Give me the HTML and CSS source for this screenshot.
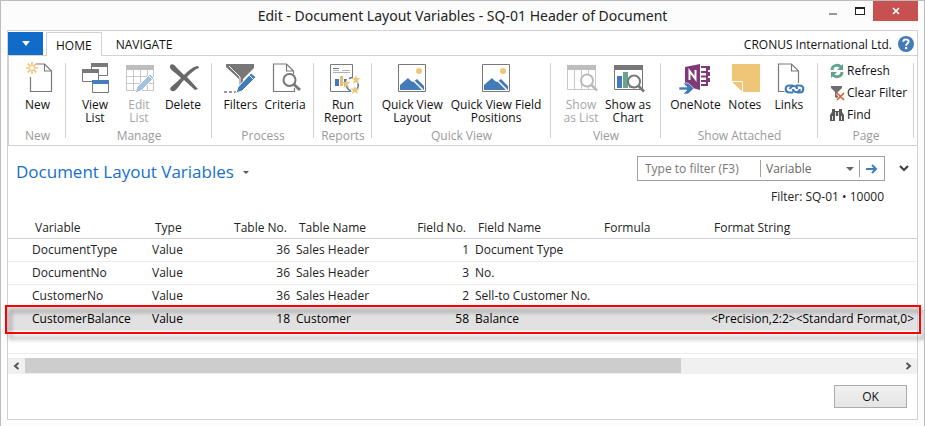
FILE: index.html
```html
<!DOCTYPE html>
<html lang="en">
<head>
<meta charset="utf-8">
<title>Edit - Document Layout Variables</title>
<link rel="stylesheet" href="styles.css">
</head>
<body>
<header class="titlebar">
  <h1 class="window-title">Edit - Document Layout Variables - SQ-01 Header of Document</h1>
  <div class="window-controls">
    <button class="win-btn" aria-label="Minimize"><svg width="10" height="10" viewBox="0 0 10 10"><path d="M1 7h8v2H1z" fill="#999"/></svg></button>
    <button class="win-btn" aria-label="Maximize"><svg width="10" height="10" viewBox="0 0 10 10"><path d="M0 1h10v8H0zM1 3v5h8V3z" fill="#222" fill-rule="evenodd"/></svg></button>
    <button class="win-btn win-close" aria-label="Close"><svg width="8" height="8" viewBox="0 0 8 8"><path d="M1 1l6 6M7 1L1 7" stroke="#fff" stroke-width="1.7"/></svg></button>
  </div>
</header>
<main class="client">
  <nav class="tabs">
    <button class="file-tab" aria-label="Application menu"><svg width="8" height="5" viewBox="0 0 8 5"><path d="M0 0h8L4 5z" fill="#fff"/></svg></button>
    <button class="tab tab-active">HOME</button>
    <button class="tab">NAVIGATE</button>
    <span class="company">CRONUS International Ltd.</span>
    <button class="help" aria-label="Help"><svg width="16" height="16" viewBox="0 0 16 16"><circle cx="8" cy="8" r="8" fill="#437bb8"/><path d="M5.300 5.800C5.300 2.500 10.700 2.600 10.600 5.700 10.500 7.700 8.100 7.500 8.100 9.800" fill="none" stroke="#fff" stroke-width="1.900"/><path d="M7 11h2.200v2.200H7z" fill="#fff"/></svg></button>
  </nav>
  <div class="ribbon">
    <section class="group group-new">
      <div class="items">
        <button class="item"><svg width="32" height="32" viewBox="0 0 32 32"><path d="M8.500 15v14.500h21V9l-7-7H14M22.500 2v7h7" fill="none" stroke="#7a7a7a" stroke-width="1.200"/><path d="M10 0v4M10 8v4M4 6h4M12 6h4M5.700 1.700l3 3M11.300 7.300l3 3M14.300 1.700l-3 3M8.700 7.300l-3 3" stroke="#efc678" stroke-width="1.700"/></svg>New</button>
      </div>
      <span class="caption">New</span>
    </section>
    <section class="group group-manage">
      <div class="items">
        <button class="item"><svg width="32" height="32" viewBox="0 0 32 32"><g fill="#fff" stroke="#7a7a7a"><path d="M12.500 1.500h16v12h-16z"/><path d="M3.500 7.500h16v12h-16z"/><path d="M13.500 18.500h16v12h-16z"/></g><path d="M12 1h17v4H12zM3 7h17v4H3z" fill="#7a7a7a"/><path d="M13 18h17v4H13z" fill="#457eb9"/></svg>View<br>List</button>
        <button class="item" disabled><svg width="32" height="32" viewBox="0 0 32 32"><path d="M3 3h28v5H3z" fill="#bdbdbd"/><path d="M3.500 8v20.500h27V8M3 14.500h28M3 21.500h28M10.500 8v21M17.500 8v21M24.500 8v21" fill="none" stroke="#c8c8c8"/><path d="M12 31l2-6L27 12l4 4-13 13z" fill="#a4c1df" stroke="#fff"/><path d="M25 13l5 5" stroke="#fff"/></svg>Edit<br>List</button>
        <button class="item"><svg width="32" height="32" viewBox="0 0 32 32"><path d="M3 5C3 1 7 2 9 5l8 8C22 8 27 4 31 4l1 2c-4 1-8 5-12 9l11 12-3 1-11-10C13 22 10 28 7 29c-3 1-5-2-3-4 3-3 6-5 10-9C9 11 3 8 3 5z" fill="#686868"/></svg>Delete</button>
      </div>
      <span class="caption">Manage</span>
    </section>
    <section class="group group-process">
      <div class="items">
        <button class="item"><svg width="32" height="32" viewBox="0 0 32 32"><path d="M2 2h28v4L19 17v10h-4V17L2 5z" fill="#777"/><path d="M5 4l11 11v8" stroke="#fff" fill="none"/><path d="M0 30h3M5 30h3M10 30h3" stroke="#777" stroke-width="1.500"/><path d="M12 31l2-6L27 11l5 4-14 14z" fill="#437bb8" stroke="#fff"/><path d="M25 13l5 5" stroke="#fff"/></svg>Filters</button>
        <button class="item"><svg width="32" height="32" viewBox="0 0 32 32"><path d="M24.500 12V9l-7-7H4.500v27.500h21V26M17.500 2v7h7" fill="none" stroke="#7a7a7a" stroke-width="1.200"/><circle cx="20.500" cy="18" r="6" fill="#fff" stroke="#777" stroke-width="2"/><path d="M25 22.500l6 5.500" stroke="#777" stroke-width="3"/></svg>Criteria</button>
      </div>
      <span class="caption">Process</span>
    </section>
    <section class="group group-reports">
      <div class="items">
        <button class="item"><svg width="32" height="32" viewBox="0 0 32 32"><path d="M3.500 2.500h22v27h-22z" fill="#fff" stroke="#7a7a7a"/><path d="M6 6.500h6" stroke="#437bb8"/><path d="M15 8.500h8M6 8.500h6M15 10.500h8M6 10.500h17" stroke="#b0b0b0"/><path d="M8 17h4v7H8z" fill="#437bb8"/><path d="M13 14h3v10h-3z" fill="#e8bd70"/><path d="M17 17h3v7h-3z" fill="#437bb8"/><circle cx="26" cy="23" r="7" fill="#fff"/><path d="M22 16.500l3-1M31 21c1 3 0 5-1 7M24 29c-3-1-4-3-5-6" fill="none" stroke="#437bb8" stroke-width="1.500"/><path d="M29 13l1 3h4l-3 2 1 4-3-2-3 2 1-4-3-2h4zM19.500 17l1 3h3l-2.500 2 1 4-2.500-2-3 2 1-4-3-2h4zM28 23.500l1 3h3.500l-2.500 2 1 3.500-3-2-3 2 1-3.500-3-2h4z" fill="#efc678"/></svg>Run<br>Report</button>
      </div>
      <span class="caption">Reports</span>
    </section>
    <section class="group group-quick">
      <div class="items">
        <button class="item"><svg width="32" height="32" viewBox="0 0 32 32"><path d="M2.500 2.500h27v27h-27z" fill="#fff" stroke="#777"/><circle cx="23" cy="9" r="3" fill="#efc678"/><path d="M4 28v-5l8-7 3 3 2 1 4-3 7 7v4z" fill="#437bb8"/><path d="M18 19l9 9" stroke="#fff" stroke-width="1.500"/></svg>Quick View<br>Layout</button>
        <button class="item"><svg width="32" height="32" viewBox="0 0 32 32"><path d="M2.500 2.500h27v27h-27z" fill="#fff" stroke="#777"/><circle cx="23" cy="9" r="3" fill="#efc678"/><path d="M4 28v-5l8-7 3 3 2 1 4-3 7 7v4z" fill="#437bb8"/><path d="M18 19l9 9" stroke="#fff" stroke-width="1.500"/></svg>Quick View Field<br>Positions</button>
      </div>
      <span class="caption">Quick View</span>
    </section>
    <section class="group group-view">
      <div class="items">
        <button class="item" disabled><svg width="32" height="32" viewBox="0 0 32 32"><path d="M2 3h29v5H2z" fill="#bdbdbd"/><path d="M2.500 8v19.500h28V8M9.500 8v20M16.500 8v20M23.500 8v20" fill="none" stroke="#c8c8c8"/><circle cx="22" cy="18.500" r="6" fill="#fff" stroke="#bbb" stroke-width="2"/><path d="M26.500 23l5.500 5.500" stroke="#bbb" stroke-width="2.500"/></svg>Show<br>as List</button>
        <button class="item"><svg width="32" height="32" viewBox="0 0 32 32"><path d="M2 3h29v5H2z" fill="#777"/><path d="M2.500 8v19.500h28V8" fill="none" stroke="#777"/><path d="M5 14h5v12H5z" fill="#437bb8"/><path d="M11 10h5v16h-5z" fill="#69a593"/><path d="M17 17h5v9h-5z" fill="#aaa"/><circle cx="22" cy="19.500" r="6" fill="#fff" stroke="#777" stroke-width="2"/><path d="M26.500 24l5.500 5.500" stroke="#777" stroke-width="2.500"/></svg>Show as<br>Chart</button>
      </div>
      <span class="caption">View</span>
    </section>
    <section class="group group-attached">
      <div class="items">
        <button class="item"><svg width="32" height="32" viewBox="0 0 32 32"><path d="M6 5l15-3v26L6 24z" fill="#803978"/><path d="M10.500 18V9l6 8V8" fill="none" stroke="#fff" stroke-width="2"/><path d="M22 5h6v18h-6M22 10h6M22 14.500h6M22 19h6" fill="none" stroke="#803978" stroke-width="2"/><path d="M29 4h2v4h-2zM29 10h2v4h-2zM29 16h2v4h-2z" fill="#803978"/><path d="M0 25h8l-4-4h5l6 5.500L9 32H4l4-4H0z" fill="#437bb8" stroke="#fff" stroke-width=".6"/></svg>OneNote</button>
        <button class="item"><svg width="32" height="32" viewBox="0 0 32 32"><path d="M3 2h28v28H14L3 19z" fill="#efc678"/><path d="M2.500 19.500h11v11" fill="none" stroke="#fff"/><path d="M3 20h10v9z" fill="#efc678"/></svg>Notes</button>
        <button class="item"><svg width="32" height="32" viewBox="0 0 32 32"><path d="M25.500 21V9l-7-7h-13v27.500h6M18.500 2v7h7" fill="none" stroke="#7a7a7a" stroke-width="1.200"/><path d="M20 23.500h-3.500c-5 0-5 7 0 7H20M23 23.500h3.500c5 0 5 7 0 7H24M17 27c1-4 7-4 7 0M20 27c0 4 6 4 7 0" fill="none" stroke="#437bb8" stroke-width="2.200"/></svg>Links</button>
      </div>
      <span class="caption">Show Attached</span>
    </section>
    <section class="group group-page">
      <div class="small-items">
        <button class="small-item"><svg width="16" height="16" viewBox="0 0 16 16"><path d="M3 7c0-5 6-6 9-3M13 9c0 5-6 6-9 3" fill="none" stroke="#5ea38b" stroke-width="2.800"/><path d="M14 1v6H8zM2 15V9h6z" fill="#5ea38b"/></svg>Refresh</button>
        <button class="small-item"><svg width="16" height="16" viewBox="0 0 16 16"><path d="M2 1h11v2L9 7v7l-3-2V7L2 3z" fill="#6f6f6f"/><path d="M8 8l7 7M15 8l-7 7" stroke="#fff" stroke-width="3"/><path d="M7.500 7.500l7.500 7.500M15 8l-7 7" stroke="#dc5a3a" stroke-width="1.600"/></svg>Clear Filter</button>
        <button class="small-item"><svg width="16" height="16" viewBox="0 0 16 16"><path d="M3 2h3v2h4V2h3v3l2 3v6h-5V9H6v5H1V8l2-3z" fill="#595959"/><path d="M6.500 5v4M9.500 5v4M3.500 9v4M12.500 9v4" stroke="#fff" stroke-width=".8"/></svg>Find</button>
      </div>
      <span class="caption">Page</span>
    </section>
  </div>
  <div class="page-head">
    <h2 class="page-title">Document Layout Variables <button class="plain" aria-label="Page actions"><svg width="6" height="3" viewBox="0 0 6 3"><path d="M0 0h6L3 3z" fill="#555"/></svg></button></h2>
    <div class="filter-side">
      <div class="filter-row">
        <form class="filter-box">
          <input class="filter-input" type="text" placeholder="Type to filter (F3)" aria-label="Type to filter">
          <div class="select-wrap"><select class="filter-select" aria-label="Filter column"><option>Variable</option></select><svg class="select-arrow" width="8" height="4" viewBox="0 0 8 4"><path d="M0 0h8L4 4z" fill="#666"/></svg></div>
          <button class="go" type="button" aria-label="Apply filter"><svg width="12" height="10" viewBox="0 0 12 10"><path d="M0 5h10M6 1l4 4-4 4" fill="none" stroke="#437bb8" stroke-width="2"/></svg></button>
        </form>
        <button class="plain expand" aria-label="Expand filters"><svg width="10" height="7" viewBox="0 0 10 7"><path d="M1 1l4 4 4-4" fill="none" stroke="#444" stroke-width="2.200"/></svg></button>
      </div>
      <p class="filter-note">Filter: SQ-01 • 10000</p>
    </div>
  </div>
  <table class="grid">
    <colgroup><col class="c-lead"><col class="c-var"><col class="c-type"><col class="c-tno"><col class="c-tname"><col class="c-fno"><col class="c-fname"><col class="c-formula"><col></colgroup>
    <thead><tr><th></th><th>Variable</th><th>Type</th><th class="num">Table No.</th><th>Table Name</th><th class="num">Field No.</th><th>Field Name</th><th>Formula</th><th>Format String</th></tr></thead>
    <tbody>
      <tr><td></td><td>DocumentType</td><td>Value</td><td class="num">36</td><td>Sales Header</td><td class="num">1</td><td>Document Type</td><td></td><td></td></tr>
      <tr><td></td><td>DocumentNo</td><td>Value</td><td class="num">36</td><td>Sales Header</td><td class="num">3</td><td>No.</td><td></td><td></td></tr>
      <tr><td></td><td>CustomerNo</td><td>Value</td><td class="num">36</td><td>Sales Header</td><td class="num">2</td><td>Sell-to Customer No.</td><td></td><td></td></tr>
      <tr class="selected"><td><span class="callout"></span></td><td>CustomerBalance</td><td>Value</td><td class="num">18</td><td>Customer</td><td class="num">58</td><td>Balance</td><td></td><td>&lt;Precision,2:2&gt;&lt;Standard Format,0&gt;</td></tr>
      <tr><td></td><td></td><td></td><td></td><td></td><td></td><td></td><td></td><td></td></tr>
    </tbody>
  </table>
  <div class="scrollbar">
    <button class="scroll-btn" aria-label="Scroll left"><svg width="7" height="8" viewBox="0 0 7 8"><path d="M5.500 1l-3.500 3 3.500 3" fill="none" stroke="#555" stroke-width="2"/></svg></button>
    <div class="track"><div class="thumb"></div></div>
    <button class="scroll-btn" aria-label="Scroll right"><svg width="7" height="8" viewBox="0 0 7 8"><path d="M1.500 1L5 4 1.500 7" fill="none" stroke="#555" stroke-width="2"/></svg></button>
  </div>
  <footer class="actions"><button class="ok">OK</button></footer>
</main>
</body>
</html>
```
FILE: styles.css
```css
* { box-sizing: border-box; }
body {
  margin: 0;
  min-height: 100vh;
  display: flex;
  flex-direction: column;
  overflow: hidden;
  border: 1px solid #bcbcbc;
  background: #fcfcfc;
  color: #222;
  font: 12px/16px "Open Sans", "Noto Sans", sans-serif;
}
button, input, select {
  margin: 0;
  padding: 0;
  border: 0;
  background: none;
  color: inherit;
  font: inherit;
}
svg { display: block; overflow: visible; flex: none; }
h1, h2, p { margin: 0; font-weight: 400; }

.titlebar { position: relative; height: 29px; }
.window-title { font-family: "Noto Sans", "Open Sans", sans-serif; font-size: 14px; line-height: 29px; text-align: center; }
.window-controls { position: absolute; top: 0; right: 6px; display: flex; }
.win-btn { width: 27px; height: 20px; display: grid; place-items: center; }
.win-close { width: 45px; background: #c75050; }

.client {
  flex: 1;
  display: flex;
  flex-direction: column;
  margin: 0 6px 6px;
  border: 1px solid #d2d2d2;
  background: #fff;
}
.tabs { display: flex; height: 25px; padding-top: 1px; border-bottom: 1px solid #d2d2d2; color: #111; }
.file-tab { width: 35px; display: grid; place-items: center; background: #116bc9; }
.tab { padding: 0 14px; height: 24px; line-height: 26px; }
.tab-active { margin-left: 3px; padding: 0 9px; border: 1px solid #d2d2d2; border-bottom: 0; background: #fff; }
.company { margin-left: auto; line-height: 26px; }
.help { align-self: center; margin: 0 3px 0 6px; }

.ribbon { display: flex; height: 90px; padding: 7px 3px 3px 0; border-bottom: 1px solid #d2d2d2; border-left: 1px solid #d2d2d2; }
.group {
  display: flex;
  flex-direction: column;
  justify-content: space-between;
  min-width: 0;
  background: linear-gradient(#d2d2d2, #d2d2d2) right top / 1px 75px no-repeat;
}
.group-new { flex: 57 1 0; }
.group-manage { flex: 146 1 0; }
.group-process { flex: 102 1 0; }
.group-reports { flex: 58 1 0; }
.group-quick { flex: 179 1 0; }
.group-view { flex: 110 1 0; }
.group-attached { flex: 157 1 0; }
.group-page { flex: 96 1 0; }
.items { display: flex; justify-content: center; }
.item {
  display: block;
  align-self: flex-start;
  min-width: 44px;
  padding: 0 2px;
  color: #111;
  line-height: 13px;
  text-align: center;
  white-space: nowrap;
}
.item svg { margin: -1px auto 4px; }
.item:disabled { color: #a6a6a6; }
.group-quick .items { gap: 4px; }
.caption { color: #9a9a9a; line-height: 12px; text-align: center; white-space: nowrap; }
.small-items { display: flex; flex-direction: column; gap: 6px; padding-left: 11px; }
.small-item { display: flex; align-items: center; gap: 2px; color: #111; line-height: 16px; white-space: nowrap; }

.page-head { display: flex; justify-content: space-between; padding: 10px 8px 0; height: 69px; }
.page-title { display: flex; align-items: center; gap: 9px; height: 32px; color: #1570cd; font-size: 17px; }
.plain { display: grid; place-items: center; }
.filter-row { display: flex; align-items: center; gap: 14px; }
.filter-box { display: flex; align-items: center; width: 248px; height: 25px; border: 1px solid #a0a0a0; color: #666; }
.filter-input { flex: 1; min-width: 0; padding: 0 7px; outline: 0; }
.filter-input::placeholder { color: #777; opacity: 1; }
.select-wrap { display: grid; align-items: center; width: 99px; height: 17px; border-left: 1px solid #a0a0a0; }
.filter-select { grid-area: 1 / 1; width: 100%; padding-left: 5px; appearance: none; outline: 0; }
.select-arrow { grid-area: 1 / 1; justify-self: end; margin-right: 5px; pointer-events: none; }
.go { display: grid; place-items: center; width: 25px; height: 17px; border-left: 1px solid #a0a0a0; }
.filter-note { padding-right: 25px; margin-top: 8px; text-align: right; }

.grid { width: 100%; table-layout: fixed; border-collapse: separate; border-spacing: 0; }
.c-lead { width: 21px; }
.c-var { width: 120px; }
.c-type { width: 64px; }
.c-tno { width: 80px; }
.c-tname { width: 118px; }
.c-fno { width: 61px; }
.c-fname { width: 126px; }
.c-formula { width: 110px; }
th, td { height: 23px; padding: 0 3px; border-bottom: 1px solid #ececec; text-align: left; font-weight: 400; white-space: nowrap; }
th { height: 24px; padding: 3px 6px 0; border-color: #d2d2d2; }
.num { text-align: right; }
.selected { position: relative; background: #e1e1e1; color: #000; }
.callout {
  position: absolute;
  inset: -3px -4px -3px -3px;
  border: 2px solid #f00;
  filter: drop-shadow(4px 5px 2px rgba(0, 0, 0, .4));
  pointer-events: none;
}

.scrollbar { display: flex; height: 16px; margin-top: 4px; background: #f0f0f0; }
.scroll-btn { width: 17px; display: grid; place-items: center; }
.track { flex: 1; }
.thumb { width: 75%; height: 15px; background: #cdcdcd; }
.actions { display: flex; justify-content: flex-end; padding: 11px 10px; }
.ok { width: 73px; height: 23px; border: 1px solid #acacac; background: linear-gradient(#f1f1f1, #e4e4e4); color: #111; }
```
